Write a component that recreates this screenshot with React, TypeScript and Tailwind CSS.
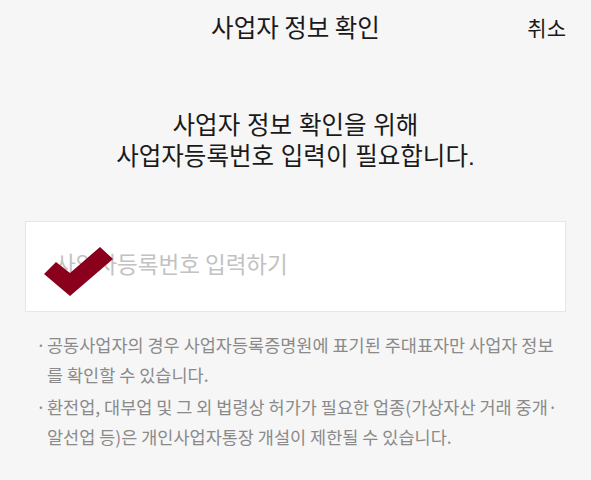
import React from "react";

export default function App() {
  return (
    <div
      className="w-[591px] h-[480px] bg-[#f6f6f6] text-[#222] overflow-hidden"
      style={{ fontFamily: '"Noto Sans CJK KR", "Noto Sans", sans-serif' }}
    >
      <header className="relative h-[54px] flex items-center justify-center">
        <h1 className="text-[24.5px] leading-none text-[#1a1a1a]">사업자 정보 확인</h1>
        <button className="absolute right-[25px] top-[17px] text-[21px] leading-none text-[#1a1a1a]">취소</button>
      </header>

      <p
        className="mt-[56px] text-center text-[24.5px] leading-[31px] text-[#1a1a1a]"
        style={{ fontFamily: '"Liberation Sans", "Noto Sans CJK KR", sans-serif' }}
      >
        사업자 정보 확인을 위해
        <br />
        사업자등록번호 입력이 필요합니다.
      </p>

      <div className="mt-[49px] mx-[25px] relative h-[91px] bg-white border border-[#e6e6e6] flex items-center pl-[29px] pb-[5px]">
        <span className="text-[22.5px] text-[#c2c2c2]">사업자등록번호 입력하기</span>
        <svg
          className="absolute left-0 top-0"
          width="120"
          height="90"
          viewBox="0 0 120 90"
        >
          <polygon
            points="18,52 30,40 44,51 74,25 87,37 44,74"
            fill="#8a001c"
          />
        </svg>
      </div>

      <ul className="mt-[18px] pl-[36px] text-[17.5px] leading-[30px] text-[#8a8a8a] flex flex-col gap-[2px] whitespace-nowrap">
        <li className="flex">
          <span className="w-[11px] shrink-0">·</span>
          <span>
            공동사업자의 경우 사업자등록증명원에 표기된 주대표자만 사업자 정보
            <br />
            를 확인할 수 있습니다.
          </span>
        </li>
        <li className="flex">
          <span className="w-[11px] shrink-0">·</span>
          <span>
            환전업, 대부업 및 그 외 법령상 허가가 필요한 업종(가상자산 거래 중개·
            <br />
            알선업 등)은 개인사업자통장 개설이 제한될 수 있습니다.
          </span>
        </li>
      </ul>
    </div>
  );
}
